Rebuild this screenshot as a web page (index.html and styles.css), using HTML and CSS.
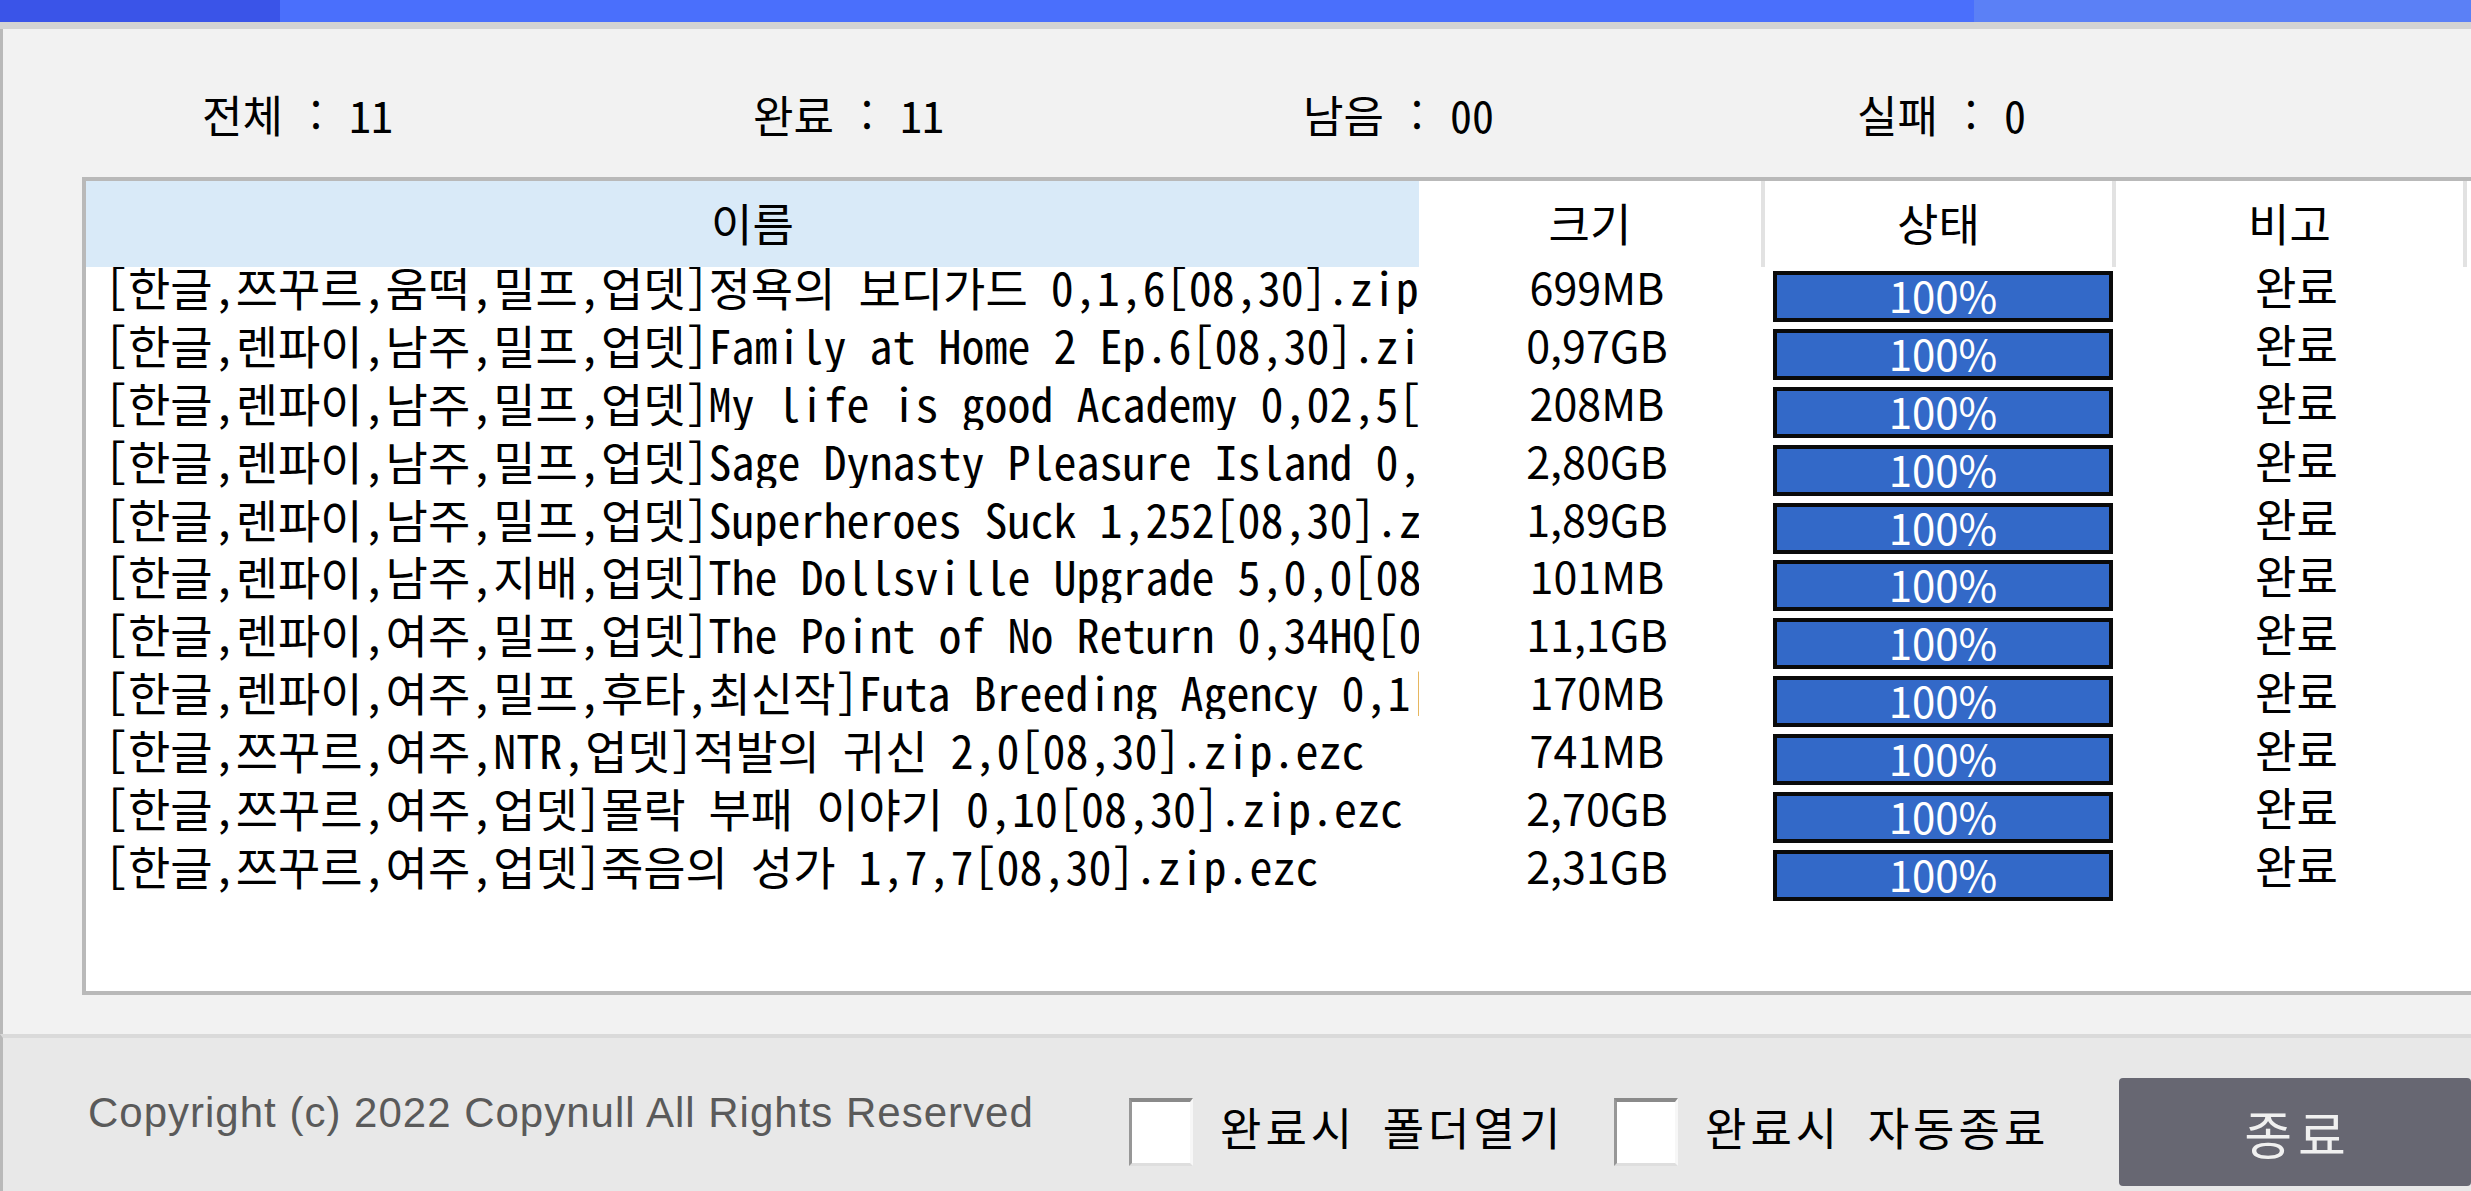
FILE: index.html
```html
<!DOCTYPE html>
<html lang="ko">
<head>
<meta charset="utf-8">
<title>다운로드</title>
<link rel="stylesheet" href="styles.css">
</head>
<body>
<div class="window">
  <div class="titlebar">
    <div class="seg seg1"></div>
    <div class="seg seg2"></div>
    <div class="seg seg3"></div>
  </div>
  <div class="main">
    <div class="stats">
      <span class="stat">전체 : 11</span>
      <span class="stat">완료 : 11</span>
      <span class="stat">남음 : 00</span>
      <span class="stat">실패 : 0</span>
    </div>
    <div class="table">
      <div class="thead">
        <div class="th th-name">이름</div>
        <div class="th th-size">크기</div>
        <div class="th th-status">상태</div>
        <div class="th th-memo">비고</div>
      </div>
      <div class="tbody">
        <div class="row"><div class="c-name">[한글,쯔꾸르,움떡,밀프,업뎃]정욕의 보디가드 0,1,6[08,30].zip.ezc</div><div class="c-size">699MB</div><div class="c-status"><div class="bar">100%</div></div><div class="c-memo">완료</div></div>
        <div class="row"><div class="c-name">[한글,렌파이,남주,밀프,업뎃]Family at Home 2 Ep.6[08,30].zip.ezc</div><div class="c-size">0,97GB</div><div class="c-status"><div class="bar">100%</div></div><div class="c-memo">완료</div></div>
        <div class="row"><div class="c-name">[한글,렌파이,남주,밀프,업뎃]My life is good Academy 0,02,5[08,30].zip.ezc</div><div class="c-size">208MB</div><div class="c-status"><div class="bar">100%</div></div><div class="c-memo">완료</div></div>
        <div class="row"><div class="c-name">[한글,렌파이,남주,밀프,업뎃]Sage Dynasty Pleasure Island 0,1[08,30].zip.ezc</div><div class="c-size">2,80GB</div><div class="c-status"><div class="bar">100%</div></div><div class="c-memo">완료</div></div>
        <div class="row"><div class="c-name">[한글,렌파이,남주,밀프,업뎃]Superheroes Suck 1,252[08,30].zip.ezc</div><div class="c-size">1,89GB</div><div class="c-status"><div class="bar">100%</div></div><div class="c-memo">완료</div></div>
        <div class="row"><div class="c-name">[한글,렌파이,남주,지배,업뎃]The Dollsville Upgrade 5,0,0[08,30].zip.ezc</div><div class="c-size">101MB</div><div class="c-status"><div class="bar">100%</div></div><div class="c-memo">완료</div></div>
        <div class="row"><div class="c-name">[한글,렌파이,여주,밀프,업뎃]The Point of No Return 0,34HQ[08,30].zip.ezc</div><div class="c-size">11,1GB</div><div class="c-status"><div class="bar">100%</div></div><div class="c-memo">완료</div></div>
        <div class="row"><div class="c-name">[한글,렌파이,여주,밀프,후타,최신작]Futa Breeding Agency 0,1[08,30].zip.ezc</div><div class="c-size">170MB</div><div class="c-status"><div class="bar">100%</div></div><div class="c-memo">완료</div></div>
        <div class="row"><div class="c-name">[한글,쯔꾸르,여주,NTR,업뎃]적발의 귀신 2,0[08,30].zip.ezc</div><div class="c-size">741MB</div><div class="c-status"><div class="bar">100%</div></div><div class="c-memo">완료</div></div>
        <div class="row"><div class="c-name">[한글,쯔꾸르,여주,업뎃]몰락 부패 이야기 0,10[08,30].zip.ezc</div><div class="c-size">2,70GB</div><div class="c-status"><div class="bar">100%</div></div><div class="c-memo">완료</div></div>
        <div class="row"><div class="c-name">[한글,쯔꾸르,여주,업뎃]죽음의 성가 1,7,7[08,30].zip.ezc</div><div class="c-size">2,31GB</div><div class="c-status"><div class="bar">100%</div></div><div class="c-memo">완료</div></div>
      </div>
    </div>
  </div>
  <div class="footer">
    <div class="copyright">Copyright (c) 2022 Copynull All Rights Reserved</div>
    <label class="opt opt1"><span class="box"></span><span class="opt-text">완료시 폴더열기</span></label>
    <label class="opt opt2"><span class="box"></span><span class="opt-text">완료시 자동종료</span></label>
    <button class="close-btn">종료</button>
  </div>
</div>
</body>
</html>
```

FILE: styles.css
```css
html, body {
  margin: 0;
  padding: 0;
  width: 2471px;
  height: 1191px;
  overflow: hidden;
  background: #f2f2f2;
}

.window {
  display: flex;
  flex-direction: column;
  width: 2471px;
  height: 1191px;
  font-family: "Noto Sans CJK KR", "Noto Sans", sans-serif;
  color: #000;
}

.stat,
.c-name,
.opt-text {
  font-family: "Noto Sans Mono CJK KR", "Noto Sans CJK KR", monospace;
  font-feature-settings: "hwid" 1;
}

.titlebar {
  display: flex;
  height: 22px;
  border-bottom: 7px solid #d3d3d3;
  flex: 0 0 auto;
}
.seg1 { width: 280px; background: #3a54e8; }
.seg2 { width: 1694px; background: #4a6ffc; }
.seg3 { flex: 1; background: #5b80f6; }

.main {
  flex: 0 0 1005px;
  border-left: 3px solid #b9b9b9;
  background: #f2f2f2;
  display: flex;
  flex-direction: column;
}

.stats {
  display: grid;
  grid-template-columns: 551px 550px 554px 551px;
  padding-left: 199px;
  padding-top: 56px;
  height: 92px;
  align-items: start;
  font-size: 44px;
  line-height: 58px;
}
.stat {
  white-space: pre;
}

.table {
  margin-left: 79px;
  width: 2420px;
  height: 810px;
  border: 4px solid #b9b9b9;
  border-right: none;
  background: #fff;
  display: flex;
  flex-direction: column;
  overflow: hidden;
}

.thead {
  display: flex;
  height: 86px;
  flex: 0 0 auto;
  position: relative;
  z-index: 1;
  background: #fff;
}
.th {
  display: flex;
  align-items: center;
  justify-content: center;
  font-size: 45px;
  box-sizing: border-box;
  padding-bottom: 4px;
}
.th-name { width: 1333px; background: #d9eaf8; }
.th-size { width: 346px; border-right: 4px solid #e2e2e2; }
.th-status { width: 351px; border-right: 4px solid #e2e2e2; }
.th-memo { width: 351px; border-right: 4px solid #e2e2e2; }

.tbody {
  flex: 1;
  overflow: hidden;
}

.row {
  display: flex;
  height: 57.9px;
  font-size: 45px;
}
.c-name, .c-size, .c-memo {
  line-height: 56px;
  height: 56px;
  margin-top: -9px;
  white-space: nowrap;
  overflow: hidden;
  box-sizing: border-box;
}
.c-name {
  width: 1333px;
  padding-left: 19px;
  padding-right: 4px;
  font-size: 46px;
}
.c-size {
  width: 346px;
  text-align: center;
  font-size: 43px;
  padding-left: 10px;
}
.c-status {
  width: 351px;
  box-sizing: border-box;
  padding-left: 8px;
  padding-top: 4px;
}
.c-memo {
  width: 351px;
  text-align: center;
  padding-left: 10px;
}

.bar {
  width: 340px;
  height: 51px;
  box-sizing: border-box;
  border: 4px solid #0a0a0a;
  background: #3369c8;
  color: #fff;
  font-size: 42px;
  line-height: 40px;
  text-align: center;
}

.footer {
  flex: 1;
  border-top: 4px solid #dadada;
  border-left: 3px solid #b9b9b9;
  background: #e8e8e8;
  display: flex;
  align-items: flex-start;
  padding-left: 85px;
  padding-top: 40px;
}

.copyright {
  flex: 0 0 1041px;
  font-family: "Liberation Sans", Arial, sans-serif;
  font-size: 42px;
  letter-spacing: 1px;
  color: #5a5a5a;
  margin-top: 11px;
  white-space: nowrap;
}

.opt {
  display: flex;
  align-items: center;
  font-size: 45px;
  white-space: nowrap;
  margin-top: 20px;
}
.opt1 { flex: 0 0 485px; }
.opt2 { flex: 0 0 505px; }

.box {
  width: 64px;
  height: 68px;
  box-sizing: border-box;
  background: #fff;
  border-top: 4px solid #8a8a8a;
  border-left: 3px solid #979797;
  border-right: 3px solid #f7f7f7;
  border-bottom: 3px solid #dedede;
  margin-right: 27px;
}

.opt-text {
  line-height: 58px;
  padding-bottom: 10px;
  letter-spacing: 4px;
}

.close-btn {
  width: 352px;
  height: 108px;
  border: none;
  border-radius: 4px;
  background: #676772;
  color: #f0f0f0;
  font-family: "Noto Sans CJK KR", sans-serif;
  font-size: 52px;
  letter-spacing: 6px;
  padding: 0 0 0 6px;
}
```
